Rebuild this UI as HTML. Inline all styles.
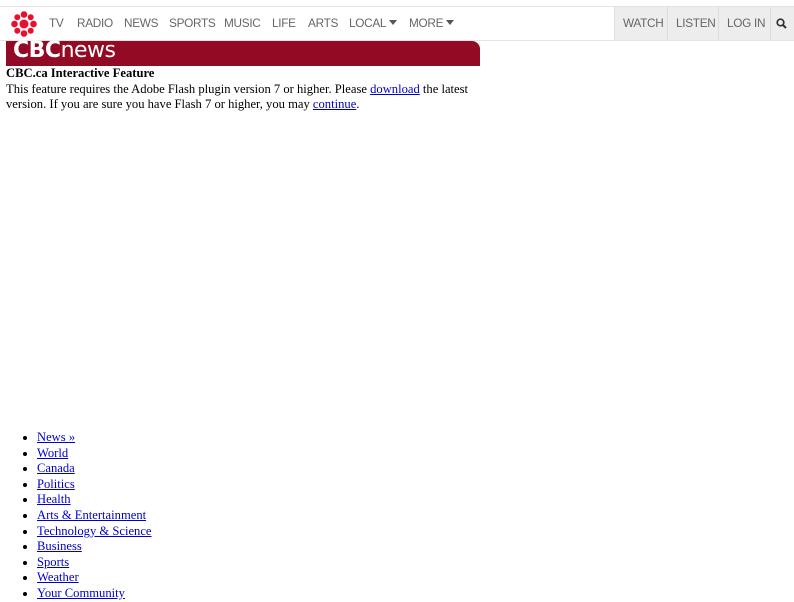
<!DOCTYPE html>
<html><head><meta charset="utf-8"><style>
body{margin:0;background:#fff;font-family:"Liberation Serif",serif;font-size:12.6px;color:#000;width:794px;height:600px;overflow:hidden;position:relative}
.hdr{position:absolute;left:0;top:6px;width:794px;height:33px;border-top:1px solid #e3e3e3;border-bottom:1px solid #e3e3e3;font-family:"Liberation Sans",sans-serif;font-size:11.8px;letter-spacing:-0.3px;color:#666}
.hdr span{position:absolute;top:9px}
.gr{position:absolute;top:0;height:33px;background:#ededed;border-left:1px solid #ddd}
.tri{display:inline-block;width:0;height:0;border-left:4px solid transparent;border-right:4px solid transparent;border-top:5px solid #555;margin-left:3px;vertical-align:2px}
.ban{position:absolute;left:6px;top:41px;width:474px;height:25px;background:#930a25;border-top-right-radius:8px}
.ban b{position:absolute;left:7px;top:-3px;color:#fff;font-family:"DejaVu Sans",sans-serif;font-size:22px;letter-spacing:-0.5px}
.txt{position:absolute;left:6px;top:66px;width:475px;line-height:15.7px}
a{color:#00c;text-decoration:underline}
ul{position:absolute;left:0;top:430px;margin:0;padding-left:37px;line-height:15.6px}
</style></head><body>
<div class="hdr">
<svg style="position:absolute;left:11px;top:4px" width="26" height="26" viewBox="0 0 26 26"><g fill="#e8112d"><circle cx="13" cy="13" r="4.5"/><circle cx="13" cy="3.5" r="3.3"/><circle cx="13" cy="22.5" r="3.3"/><circle cx="3.5" cy="13" r="3.3"/><circle cx="22.5" cy="13" r="3.3"/><circle cx="6.3" cy="6.3" r="3"/><circle cx="19.7" cy="6.3" r="3"/><circle cx="6.3" cy="19.7" r="3"/><circle cx="19.7" cy="19.7" r="3"/></g></svg>
<span style="left:49px">TV</span><span style="left:77px">RADIO</span><span style="left:124px">NEWS</span><span style="left:169px">SPORTS</span><span style="left:224px">MUSIC</span><span style="left:272px">LIFE</span><span style="left:308px">ARTS</span><span style="left:349px">LOCAL<i class="tri"></i></span><span style="left:409px">MORE<i class="tri"></i></span>
<div class="gr" style="left:614px;width:180px"></div>
<div class="gr" style="left:667px;width:0"></div><div class="gr" style="left:718px;width:0"></div><div class="gr" style="left:770px;width:0"></div>
<span style="left:623px">WATCH</span><span style="left:676px">LISTEN</span><span style="left:727px">LOG IN</span>
<svg style="position:absolute;left:776px;top:11px" width="11" height="11" viewBox="0 0 11 11"><circle cx="4.5" cy="4.5" r="3.3" fill="none" stroke="#333" stroke-width="1.7"/><path d="M7 7l3 3" stroke="#333" stroke-width="2"/></svg>
</div>
<div class="ban"><b>CBC<span style="position:static;font-weight:normal">news</span></b></div>
<div class="txt"><b>CBC.ca Interactive Feature</b><br>This feature requires the Adobe Flash plugin version 7 or higher. Please <a>download</a> the latest version. If you are sure you have Flash 7 or higher, you may <a>continue</a>.</div>
<ul><li><a>News »</a></li><li><a>World</a></li><li><a>Canada</a></li><li><a>Politics</a></li><li><a>Health</a></li><li><a>Arts &amp; Entertainment</a></li><li><a>Technology &amp; Science</a></li><li><a>Business</a></li><li><a>Sports</a></li><li><a>Weather</a></li><li><a>Your Community</a></li></ul>
</body></html>
